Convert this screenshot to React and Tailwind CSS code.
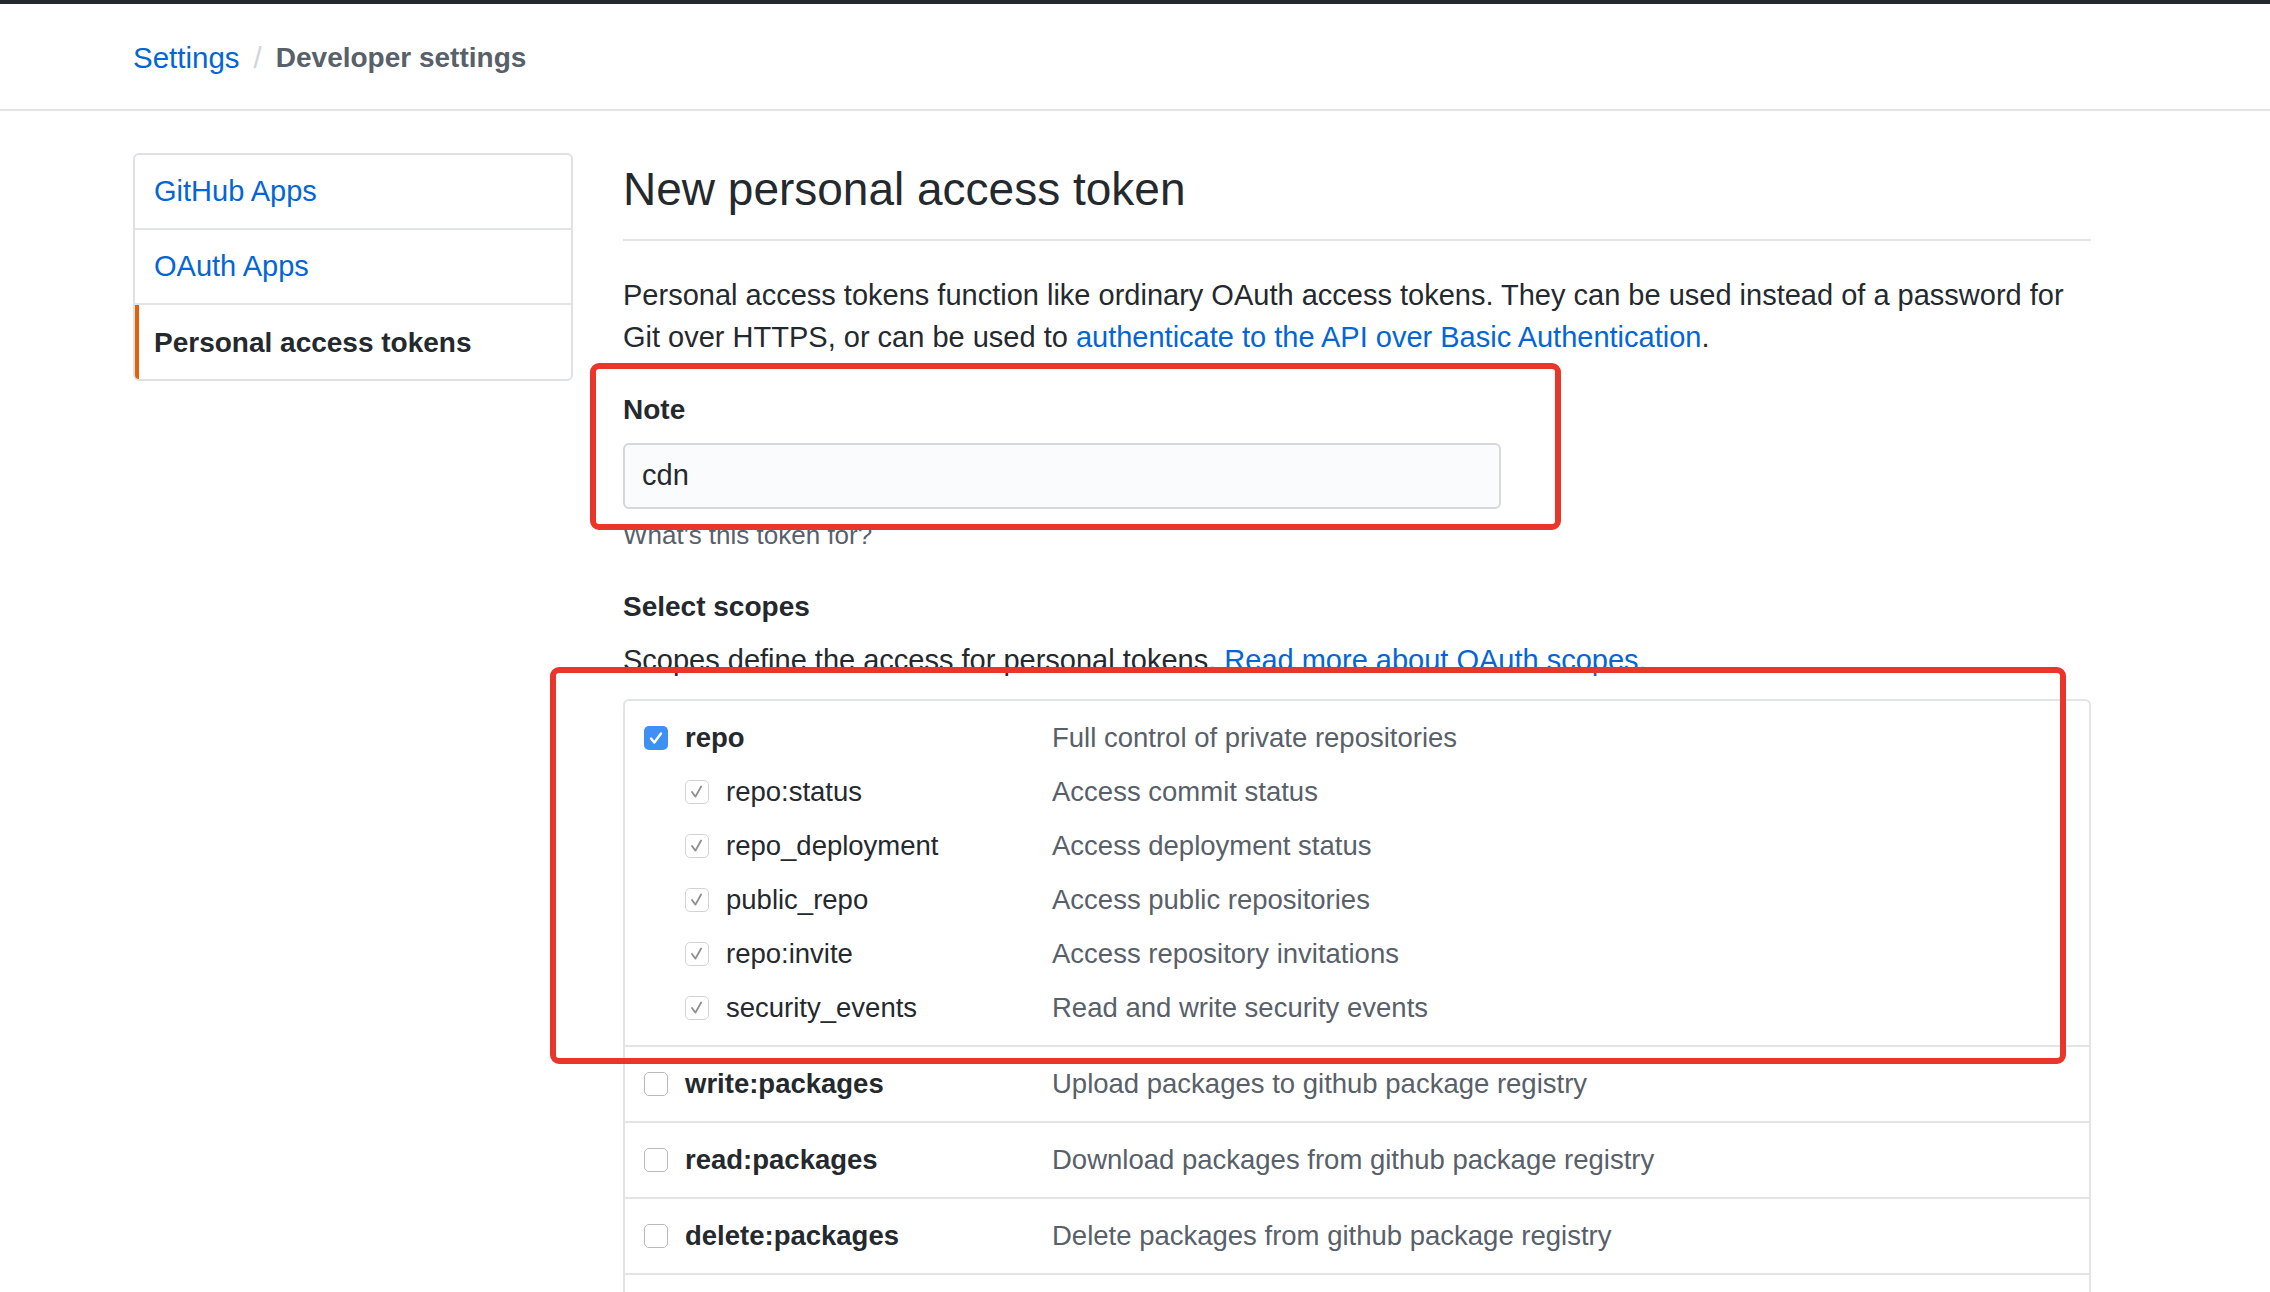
import React from 'react';

const sideLinks = [
  { label: 'GitHub Apps', active: false },
  { label: 'OAuth Apps', active: false },
  { label: 'Personal access tokens', active: true },
];

const repoChildren = [
  { name: 'repo:status', desc: 'Access commit status' },
  { name: 'repo_deployment', desc: 'Access deployment status' },
  { name: 'public_repo', desc: 'Access public repositories' },
  { name: 'repo:invite', desc: 'Access repository invitations' },
  { name: 'security_events', desc: 'Read and write security events' },
];

const otherScopes = [
  { name: 'write:packages', desc: 'Upload packages to github package registry' },
  { name: 'read:packages', desc: 'Download packages from github package registry' },
  { name: 'delete:packages', desc: 'Delete packages from github package registry' },
];

function Checkbox({ variant }) {
  if (variant === 'checked') {
    return (
      <span className="flex h-6 w-6 shrink-0 items-center justify-center rounded-[5px] bg-[#3f8ff5]">
        <svg width="24" height="24" viewBox="0 0 24 24" fill="none">
          <path d="M7 12.5 L10.3 16.5 L17 7.5" stroke="#fff" strokeWidth="2.4" strokeLinecap="round" strokeLinejoin="round" />
        </svg>
      </span>
    );
  }
  if (variant === 'sub') {
    return (
      <span className="flex h-6 w-6 shrink-0 items-center justify-center rounded-[5px] border border-[#d3d3d3] bg-white">
        <svg width="22" height="22" viewBox="0 0 24 24" fill="none">
          <path d="M6.5 12 L10.3 17 L16.5 6" stroke="#8f8f8f" strokeWidth="2" strokeLinecap="round" strokeLinejoin="round" />
        </svg>
      </span>
    );
  }
  return <span className="h-6 w-6 shrink-0 rounded-[5px] border-[1.5px] border-[#b9b9b9] bg-white" />;
}

export default function App() {
  return (
    <div className="relative h-[1292px] w-full overflow-hidden bg-white font-['Liberation_Sans',Arial,sans-serif] text-[#24292e]">
      <div className="h-[4px] bg-[#24292e]" />

      {/* Breadcrumb header */}
      <div className="h-[107px] border-b-2 border-[#e1e4e8]">
        <div className="ml-[133px] flex h-full items-center pt-[3px] text-[29.5px] leading-[40px]">
          <a className="text-[#0366d6]">Settings</a>
          <span className="mx-[14px] text-[#d1d5da]">/</span>
          <span className="text-[28px] font-bold text-[#586069]">Developer settings</span>
        </div>
      </div>

      <div className="ml-[133px] flex w-[1958px] gap-[50px] pt-[42px]">
        {/* Sidebar */}
        <div className="h-[228px] w-[440px] shrink-0 overflow-hidden rounded-[6px] border-2 border-[#dfe2e5]">
          {sideLinks.map((l, i) => (
            <div
              key={l.label}
              className={`relative flex h-[75px] items-center pl-[19px] ${i < sideLinks.length - 1 ? 'border-b-2 border-[#e1e4e8]' : ''}`}
            >
              {l.active && <span className="absolute bottom-0 left-0 top-0 w-[4px] bg-[#e36209]" />}
              <span className={l.active ? 'text-[28px] font-bold text-[#24292e]' : 'text-[29px] text-[#0366d6]'}>{l.label}</span>
            </div>
          ))}
        </div>

        {/* Main */}
        <div className="w-[1468px]">
          <h2 className="border-b-2 border-[#e1e4e8] pb-[22px] pt-[8px] text-[46px] font-normal leading-[56px]">
            New personal access token
          </h2>

          <p className="mt-[33px] text-[29px] leading-[42px]">
            Personal access tokens function like ordinary OAuth access tokens. They can be used instead of a password for
            <br />
            Git over HTTPS, or can be used to{' '}
            <a className="text-[#0366d6]">authenticate to the API over Basic Authentication</a>.
          </p>

          <div className="mt-[34px] text-[28px] font-bold leading-[36px]">Note</div>
          <div className="mt-[15px] flex h-[66px] w-[878px] items-center rounded-[6px] border-2 border-[#d5d8dc] bg-[#fafbfc] px-[17px] text-[29px]">
            cdn
          </div>
          <div className="mt-[8px] text-[26px] leading-[36px] text-[#586069]">What's this token for?</div>

          <div className="mt-[36px] text-[28px] font-bold leading-[36px]">Select scopes</div>
          <p className="mt-[14px] text-[29px] leading-[42px]">
            Scopes define the access for personal tokens.{' '}
            <a className="text-[#0366d6]">Read more about OAuth scopes.</a>
          </p>

          {/* Scope table */}
          <div className="mt-[18px] rounded-[6px] border-2 border-[#e1e4e8] text-[27.5px]">
            <div className="border-b-2 border-[#e1e4e8] py-[10px]">
              <div className="flex h-[54px] items-center pl-[19px]">
                <div className="flex w-[408px] items-center gap-[17px]">
                  <Checkbox variant="checked" />
                  <span className="font-bold">repo</span>
                </div>
                <span className="text-[#586069]">Full control of private repositories</span>
              </div>
              {repoChildren.map((c) => (
                <div key={c.name} className="flex h-[54px] items-center pl-[19px]">
                  <div className="flex w-[408px] items-center gap-[17px] pl-[41px]">
                    <Checkbox variant="sub" />
                    <span>{c.name}</span>
                  </div>
                  <span className="text-[#586069]">{c.desc}</span>
                </div>
              ))}
            </div>
            {otherScopes.map((s) => (
              <div key={s.name} className="flex h-[76px] items-center border-b-2 border-[#e1e4e8] pl-[19px]">
                <div className="flex w-[408px] items-center gap-[17px]">
                  <Checkbox variant="empty" />
                  <span className="font-bold">{s.name}</span>
                </div>
                <span className="text-[#586069]">{s.desc}</span>
              </div>
            ))}
            <div className="h-[76px]" />
          </div>
        </div>
      </div>

      {/* Annotation boxes */}
      <div className="pointer-events-none absolute left-[590px] top-[363px] h-[167px] w-[971px] rounded-[9px] border-[6px] border-[#e8362b]" />
      <div className="pointer-events-none absolute left-[550px] top-[667px] h-[397px] w-[1516px] rounded-[9px] border-[6px] border-[#e8362b]" />
    </div>
  );
}
